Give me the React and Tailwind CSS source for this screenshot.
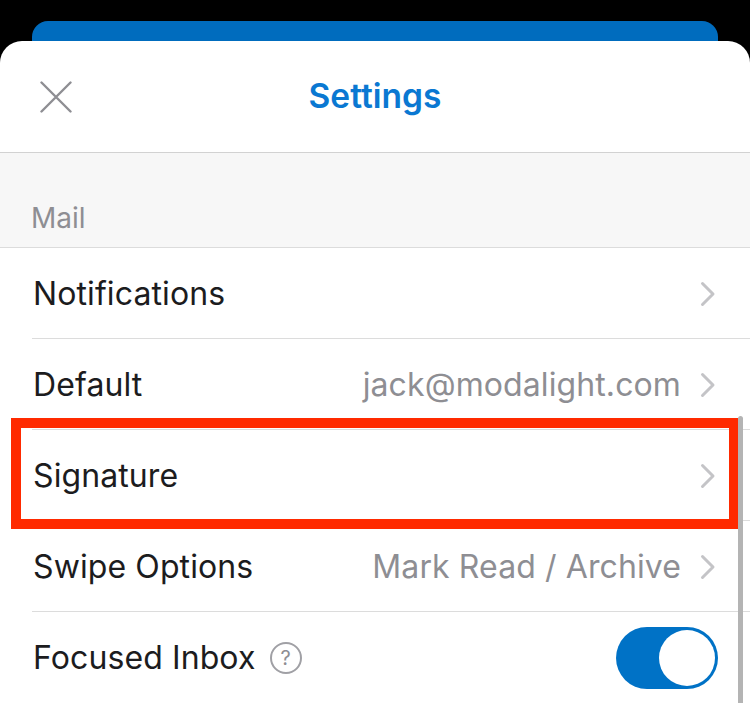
import React from "react";

// settings rows shown under the Mail section
const rows = [
  { label: "Notifications", value: "" },
  { label: "Default", value: "jack@modalight.com" },
  { label: "Signature", value: "" },
  { label: "Swipe Options", value: "Mark Read / Archive" },
];

function Chevron() {
  return (
    <svg width="16" height="26" viewBox="0 0 16 26" fill="none" className="shrink-0">
      <path d="M2.5 2.5 L13 13 L2.5 23.5" stroke="#c4c4c7" strokeWidth="3" strokeLinecap="round" strokeLinejoin="round" />
    </svg>
  );
}

function Row({ label, value }) {
  return (
    <div className="flex h-[91px] items-center pl-[33px] pr-[34px] relative">
      <span className="text-[32px] text-[#1c1c1e] tracking-[0.1px]">{label}</span>
      <div className="ml-auto flex items-center gap-[19px]">
        {value && <span className="text-[32px] text-[#8e8e93] tracking-[0.1px]">{value}</span>}
        <Chevron />
      </div>
      <div className="absolute bottom-0 left-[32px] right-0 h-px bg-[#dcdcdc]" />
    </div>
  );
}

export default function App() {
  return (
    <div className="w-[750px] h-[703px] bg-black overflow-hidden relative" style={{ fontFamily: "Inter, 'Liberation Sans', sans-serif" }}>
      <div className="pt-[21px] px-[32px]">
        <div className="h-[20px] rounded-t-[16px] bg-[#006cbe]" />
      </div>
      <div className="bg-white rounded-t-[22px] h-[662px]">
        {/* header */}
        <div className="h-[112px] flex items-center relative border-b border-[#d2d2d2]">
          <svg width="32" height="32" viewBox="0 0 32 32" className="absolute left-[40px] top-[40px]">
            <path d="M1.5 1.5 L30.5 30.5 M30.5 1.5 L1.5 30.5" stroke="#8e8e93" strokeWidth="2.4" strokeLinecap="round" />
          </svg>
          <h1 className="w-full text-center text-[33.5px] font-semibold text-[#0a78d2]">Settings</h1>
        </div>
        {/* section label */}
        <div className="h-[95px] bg-[#f7f7f7] border-b border-[#dcdcdc] flex items-end pl-[31px] pb-[8px]">
          <span className="text-[28px] text-[#8e8e93]">Mail</span>
        </div>
        {rows.map((r) => (
          <Row key={r.label} label={r.label} value={r.value} />
        ))}
        <div className="flex h-[91px] items-center pl-[33px] pr-[32px]">
          <span className="text-[32px] text-[#1c1c1e] tracking-[0.1px]">Focused Inbox</span>
          <div className="ml-[14px] w-[32px] h-[32px] rounded-full border-2 border-[#a0a0a5] flex items-center justify-center text-[20px] text-[#8e8e93] leading-none">?</div>
          <div className="ml-auto w-[102px] h-[62px] rounded-full bg-[#0072c6] flex items-center justify-end pr-[3px]">
            <div className="w-[56px] h-[56px] rounded-full bg-white" />
          </div>
        </div>
      </div>
      {/* annotation box around Signature */}
      <div className="absolute left-[11px] top-[418px] w-[728px] h-[111px] border-[10px] border-[#ff2a00]" />
      {/* scroll indicator */}
      <div className="absolute left-[738px] top-[416px] w-[5px] h-[300px] rounded-full bg-[#b4b4b4]" />
    </div>
  );
}
